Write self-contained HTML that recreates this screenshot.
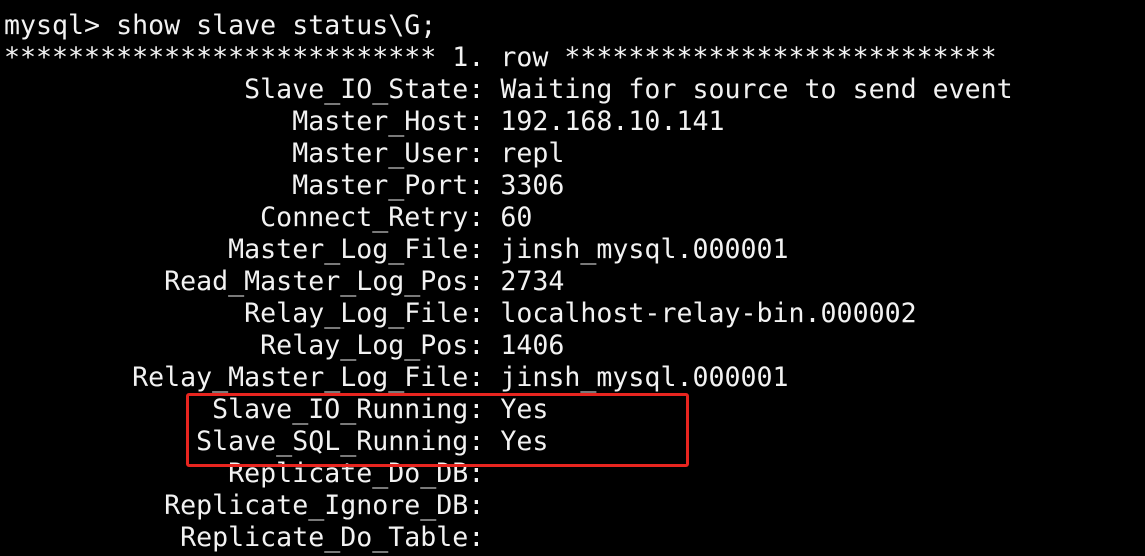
<!DOCTYPE html>
<html><head><meta charset="utf-8"><style>
html,body{margin:0;padding:0;background:#000;width:1145px;height:556px;overflow:hidden}
pre{margin:0;position:absolute;left:4px;top:9.5px;font-family:"DejaVu Sans Mono","Liberation Mono",monospace;font-size:26.6px;line-height:32px;color:#f2f2f2;white-space:pre}
.box{position:absolute;left:186px;top:393px;width:497px;height:68px;border:3px solid #e8251f;border-radius:3px}
</style></head><body>
<pre>mysql&gt; show slave status\G;
*************************** 1. row ***************************
               Slave_IO_State: Waiting for source to send event
                  Master_Host: 192.168.10.141
                  Master_User: repl
                  Master_Port: 3306
                Connect_Retry: 60
              Master_Log_File: jinsh_mysql.000001
          Read_Master_Log_Pos: 2734
               Relay_Log_File: localhost-relay-bin.000002
                Relay_Log_Pos: 1406
        Relay_Master_Log_File: jinsh_mysql.000001
             Slave_IO_Running: Yes
            Slave_SQL_Running: Yes
              Replicate_Do_DB: 
          Replicate_Ignore_DB: 
           Replicate_Do_Table: </pre>
<div class="box"></div>
</body></html>
